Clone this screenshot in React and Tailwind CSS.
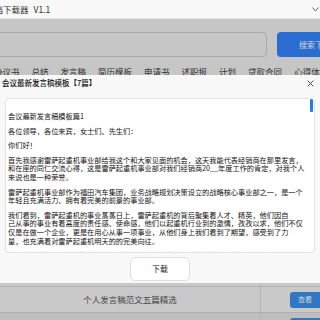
import React from "react";

const FONT = { fontFamily: '"Noto Sans CJK SC", "Noto Sans", sans-serif' };

const navItems = ["协议书", "总结", "发言稿", "简历模板", "申请书", "述职报", "计划", "贷款合同", "心得体会"];

export default function App() {
  return (
    <div className="relative w-[320px] h-[320px] overflow-hidden bg-[#f2f2f2] text-[#333]" style={FONT}>
      {/* title bar */}
      <div className="h-[19px] bg-[#f8f8f8] flex items-center justify-between border-b border-[#e6e6e6]">
        <div className="ml-[-14px] flex items-center text-[8.5px] text-[#333] whitespace-nowrap">
          <span>文档下载器</span>
          <span className="ml-[5px]">V1.1</span>
        </div>
        <svg width="7" height="5" viewBox="0 0 7 5" className="mr-[1px]">
          <polyline points="0.5,0.5 3.5,4 6.5,0.5" fill="none" stroke="#555" strokeWidth="0.9" />
        </svg>
      </div>

      {/* search */}
      <div className="mt-[13px] flex items-center gap-[10px] ml-[-10px] w-[360px]">
        <div className="w-[277px] h-[25px] bg-[#f2f2f2] border border-[#d0d0d0] rounded-[4px]" />
        <div className="w-[60px] h-[25px] bg-[#3385ff] rounded-[4px] flex items-center pl-[22px] text-[8px] text-white whitespace-nowrap">
          搜索下载
        </div>
      </div>

      {/* nav */}
      <div className="mt-[9px] flex gap-[12px] ml-[-6px] text-[8.5px] leading-[10px] text-[#444] whitespace-nowrap">
        {navItems.map((n) => (
          <span key={n}>{n}</span>
        ))}
      </div>

      {/* table */}
      <div className="absolute left-0 top-[261px] w-[320px]">
        {["会议最新发言稿模板【7篇】", "个人发言稿范文五篇精选", "年终总结发言稿范文"].map((t, i) => (
          <div key={t} className={`h-[26px] flex border-b border-[#d6d6d6] ${i === 2 ? "bg-[#e8e8e8]" : "bg-[#f6f6f6]"}`}>
            <div className="w-[261px] border-r border-[#dcdcdc] flex items-center justify-center text-[8.5px] text-[#555]">
              {t}
            </div>
            <div className="flex-1 flex items-center justify-end">
              <div className="w-[30px] h-[16px] bg-[#3b92f0] rounded-l-[3px] flex items-center justify-center text-[7px] text-white">
                查看
              </div>
            </div>
          </div>
        ))}
      </div>

      {/* overlay */}
      <div className="absolute left-0 right-0 top-[19px] bottom-0 bg-black/[0.18]" />

      {/* modal */}
      <div className="absolute left-0 top-[75px] w-[320px] h-[208px] bg-[#f8f8f8] flex flex-col">
        <div className="h-[16px] flex items-center justify-between pl-[2px] pr-[6px]">
          <span className="text-[7.5px] font-medium text-[#111]">会议最新发言稿模板【7篇】</span>
          <svg width="7" height="7" viewBox="0 0 7 7">
            <path d="M0.7 0.7 L6.3 6.3 M6.3 0.7 L0.7 6.3" stroke="#444" strokeWidth="1" />
          </svg>
        </div>
        <div className="relative ml-[5px] mt-[7px] w-[310px] h-[155px] bg-white border border-[#e2e2e2] rounded-[4px] overflow-hidden">
          <div className="absolute right-[1px] top-0 w-[3px] h-[13px] bg-[#1e7fe6] rounded-[1px]" />
          <div className="pl-[2px] pt-[13px] text-[7.2px] leading-[8.6px] text-[#111] whitespace-nowrap flex flex-col gap-[6px]">
            <p>会议最新发言稿模板篇1</p>
            <p>各位领导，各位来宾，女士们、先生们：</p>
            <p>你们好！</p>
            <p>
              首先我感谢雷萨起重机事业部给我这个和大家见面的机会，这天我能代表经销商在那里发言，
              <br />
              和在座的同仁交流心得，这是雷萨起重机事业部对我们经销商20__年度工作的肯定，对我个人
              <br />
              来说也是一种荣誉。
            </p>
            <p>
              雷萨起重机事业部作为福田汽车集团，业务战略规划决策设立的战略核心事业部之一，是一个
              <br />
              年轻且充满活力、拥有着完美的前景的事业部。
            </p>
            <p>
              我们看到，雷萨起重机的事业蒸蒸日上，雷萨起重机的背后聚集着人才、精英，他们因自
              <br />
              己从事的事业有着高度的责任感、使命感，他们以起重机行业到的激情，孜孜以求，他们不仅
              <br />
              仅是在做一个企业，更是在用心从事一项事业，从他们身上我们看到了期望，感受到了力
              <br />
              量，也充满着对雷萨起重机明天的的完美向往。
            </p>
            <p>的渴望，敢想敢为，不惧大困难，他们以积极的心态，让我们对未来充满信心和期望。</p>
          </div>
        </div>
        <div className="mt-[4px] mx-auto w-[60px] h-[24px] bg-white border border-[#dedede] rounded-[5px] flex items-center justify-center text-[8px] text-[#222]">
          下载
        </div>
      </div>
    </div>
  );
}
